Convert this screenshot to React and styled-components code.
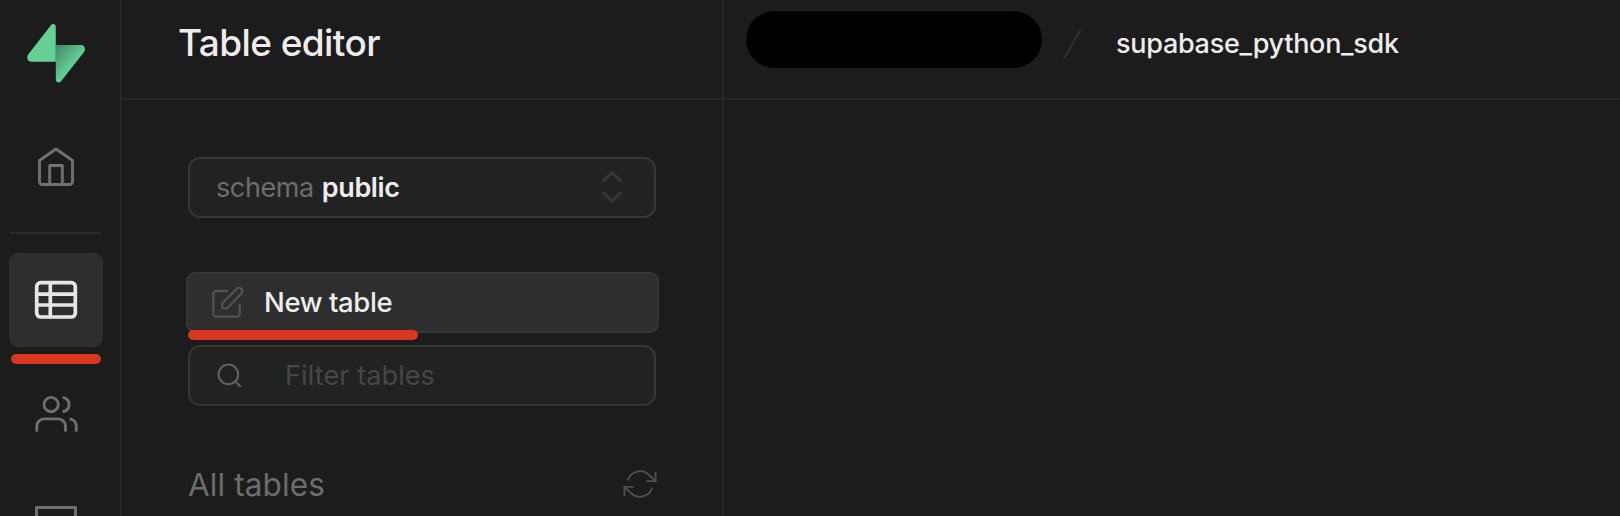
import React from "react";
import styled, { createGlobalStyle } from "styled-components";

const GlobalStyle = createGlobalStyle`
  *, *::before, *::after { box-sizing: border-box; }
  body { margin: 0; background: #1c1c1c; overflow: hidden; }
`;

const Shell = styled.div`
  display: flex;
  width: 1620px;
  height: 516px;
  overflow: hidden;
  background: #1c1c1c;
  color: #ededed;
  font-family: Inter, "Liberation Sans", sans-serif;
`;

const Rail = styled.nav`
  flex: none;
  width: 122px;
  height: 516px;
  padding-left: 9px;
  border-right: 2px solid #272727;
  overflow: hidden;
`;

const RailSlot = styled.div`
  display: flex;
  align-items: center;
  justify-content: center;
  width: 94px;
  height: ${(p) => p.$height}px;
  padding-bottom: ${(p) => p.$lift || 0}px;
  border-radius: 9px;
  background: ${(p) => (p.$active ? "#2e2e2e" : "transparent")};
  color: ${(p) => (p.$active ? "#e6e6e6" : "#707070")};
`;

const RailDivider = styled.div`
  width: 92px;
  height: 2px;
  margin-bottom: 19px;
  background: #2b2b2b;
`;

const RedMark = styled.div`
  width: ${(p) => p.$width}px;
  height: 10px;
  border-radius: 5px;
  background: #da3623;
`;

const RailMark = styled(RedMark)`
  margin: 7px 0 0 2px;
`;

const Glyph = styled.svg`
  display: block;
  flex: none;
  fill: none;
  stroke: currentColor;
  stroke-linecap: round;
  stroke-linejoin: round;
`;

const Panel = styled.aside`
  flex: none;
  display: flex;
  flex-direction: column;
  width: 602px;
  border-right: 2px solid #272727;
`;

const PanelHeader = styled.header`
  height: 100px;
  padding: 18px 0 0 56px;
  border-bottom: 2px solid #272727;
`;

const Title = styled.h1`
  margin: 0;
  font-size: 37px;
  line-height: 50px;
  font-weight: 500;
  letter-spacing: -0.6px;
  white-space: nowrap;
`;

const PanelBody = styled.div`
  display: flex;
  flex-direction: column;
  padding: 57px 66px 0;
`;

const Field = styled.div`
  display: flex;
  align-items: center;
  height: 61px;
  border: 2px solid #363636;
  border-radius: 12px;
  background: #222222;
  font-size: 27px;
  white-space: nowrap;
`;

const SchemaSelect = styled(Field)`
  padding: 0 32px 1px 26px;
`;

const SchemaKey = styled.span`
  color: #6c6c6c;
  letter-spacing: -0.4px;
`;

const SchemaValue = styled.span`
  flex: 1;
  margin-left: 8px;
  font-weight: 600;
  letter-spacing: -0.4px;
`;

const NewTableButton = styled.button`
  position: relative;
  display: flex;
  align-items: center;
  gap: 20px;
  height: 61px;
  margin: 54px -3px 0 -2px;
  padding: 0 22px 1px;
  border: 2px solid #363636;
  border-radius: 9px;
  background: #2e2e2e;
  color: #ededed;
  font: 550 27.5px Inter, "Liberation Sans", sans-serif;
  letter-spacing: -0.4px;
  white-space: nowrap;
`;

const ButtonIcon = styled.span`
  display: flex;
  color: #525252;
`;

const ButtonMark = styled(RedMark)`
  position: absolute;
  left: 0;
  bottom: -9px;
`;

const FilterField = styled(Field)`
  margin-top: 12px;
  padding: 0 26px 1px;
  gap: 42px;
  color: #606060;
`;

const Placeholder = styled.span`
  color: #474747;
  letter-spacing: 0.1px;
`;

const ListHeader = styled.div`
  display: flex;
  align-items: center;
  justify-content: space-between;
  margin: 57px -1px 0 0;
  height: 42px;
  color: #6c6c6c;
  font-size: 31.5px;
  white-space: nowrap;
`;

const ListTitle = styled.span`
  letter-spacing: 0.1px;
`;

const RefreshIcon = styled.span`
  display: flex;
  color: #505050;
`;

const Main = styled.main`
  flex: 1;
  min-width: 0;
`;

const Breadcrumbs = styled.header`
  display: flex;
  height: 100px;
  padding: 11px 0 0 22px;
  border-bottom: 2px solid #272727;
`;

const HiddenOrg = styled.div`
  width: 296px;
  height: 57px;
  border-radius: 29px;
  background: #000;
`;

const Slash = styled.div`
  display: flex;
  margin: 18px 34px 0 20px;
  color: #303030;
`;

const Project = styled.span`
  height: 34px;
  margin-top: 16px;
  font-size: 27px;
  line-height: 34px;
  font-weight: 500;
  letter-spacing: -0.28px;
  white-space: nowrap;
`;

function Logo() {
  return (
    <svg width="58" height="59" viewBox="0 0 109 113" preserveAspectRatio="none">
      <defs>
        <linearGradient id="bolt" x1="54" y1="43" x2="88" y2="72" gradientUnits="userSpaceOnUse">
          <stop offset="0" stopColor="#448763" />
          <stop offset="1" stopColor="#61cb92" />
        </linearGradient>
      </defs>
      <path
        d="M63.7 110.3C60.8 113.9 54.2 111.900 54.1 107.300V40.1H102.2C108.4 40.1 111 48 106.900 53.900L63.700 110.300Z"
        fill="url(#bolt)"
      />
      <path
        d="M45.3 2.1C48.2-1.5 54 .4 54 5V72.3H7.8C1 72.3-1.5 64.500 2.2 58.400L45.3 2.1Z"
        fill="#65cf96"
      />
    </svg>
  );
}

function HomeIcon() {
  return (
    <Glyph width="40" height="42" viewBox="0 0 40 42" strokeWidth="2.900">
      <path d="M20 3 3.500 14.500V35.500A3 3 0 0 0 6.500 38.500H33.500A3 3 0 0 0 36.500 35.500V14.500Z" />
      <path d="M13.700 38.500V19.500H26.300V38.500" />
    </Glyph>
  );
}

function TableIcon() {
  return (
    <Glyph width="44" height="40" viewBox="0 0 44 40" strokeWidth="3.700">
      <rect x="2.700" y="2.700" width="38.600" height="34.300" rx="4" />
      <path d="M16.300 3V37M3 14.200H41M3 25H41" />
    </Glyph>
  );
}

function UsersIcon() {
  return (
    <Glyph width="43" height="43" viewBox="0 0 24 24" strokeWidth="1.600">
      <path d="M17 21.500v-2.500a4 4 0 0 0-4-4H5a4 4 0 0 0-4 4v2.500" />
      <circle cx="9" cy="7" r="4" />
      <path d="M23 21.500v-2.500a4 4 0 0 0-3-3.870M16 3.130a4 4 0 0 1 0 7.750" />
    </Glyph>
  );
}

function BoxIcon() {
  return (
    <Glyph width="44" height="40" viewBox="0 0 44 40" strokeWidth="3">
      <path d="M2.500 38V2.500H41.500V38Z" />
    </Glyph>
  );
}

function EditIcon() {
  return (
    <Glyph width="34" height="34" viewBox="0 0 34 34" strokeWidth="2.300">
      <path d="M17 6H6.300a3 3 0 0 0-3 3V28.700a3 3 0 0 0 3 3H26.700a3 3 0 0 0 3-3V20" />
      <path d="M12.300 23.300V18.300L26.600 3.900a3.300 3.300 0 0 1 4.700 4.700L17.300 23.300Z" />
    </Glyph>
  );
}

function SearchIcon() {
  return (
    <Glyph width="27" height="27" viewBox="0 0 24 24" strokeWidth="1.800">
      <circle cx="11" cy="11" r="8.700" />
      <path d="M21.500 21.500L17.300 17.300" />
    </Glyph>
  );
}

export default function App() {
  return (
    <>
      <GlobalStyle />
      <Shell>
        <Rail>
          <RailSlot $height={106}>
            <Logo />
          </RailSlot>
          <RailSlot $height={126} $lift={4}>
            <HomeIcon />
          </RailSlot>
          <RailDivider />
          <RailSlot $height={94} $active>
            <TableIcon />
          </RailSlot>
          <RailMark $width={90} />
          <RailSlot $height={100} $lift={2}>
            <UsersIcon />
          </RailSlot>
          <RailSlot $height={122}>
            <BoxIcon />
          </RailSlot>
        </Rail>
        <Panel>
          <PanelHeader>
            <Title>Table editor</Title>
          </PanelHeader>
          <PanelBody>
            <SchemaSelect>
              <SchemaKey>schema</SchemaKey>
              <SchemaValue>public</SchemaValue>
              <Glyph width="20" height="34" viewBox="0 0 20 34" strokeWidth="3.600" color="#363636">
                <path d="M2 10.500 10 3l8 7.500M2 23.500 10 31l8-7.500" />
              </Glyph>
            </SchemaSelect>
            <NewTableButton>
              <ButtonIcon>
                <EditIcon />
              </ButtonIcon>
              New table
              <ButtonMark $width={230} />
            </NewTableButton>
            <FilterField>
              <SearchIcon />
              <Placeholder>Filter tables</Placeholder>
            </FilterField>
            <ListHeader>
              <ListTitle>All tables</ListTitle>
              <RefreshIcon>
                <Glyph width="34" height="34" viewBox="0 0 24 24" strokeWidth="1.300">
                  <path d="M23 4v6h-6M1 20v-6h6" />
                  <path d="M3.510 9a9 9 0 0 1 14.850-3.360L23 10M1 14l4.640 4.360A9 9 0 0 0 20.490 15" />
                </Glyph>
              </RefreshIcon>
            </ListHeader>
          </PanelBody>
        </Panel>
        <Main>
          <Breadcrumbs>
            <HiddenOrg />
            <Slash>
              <Glyph width="20" height="30" viewBox="0 0 20 30" strokeWidth="2">
                <path d="M2.500 28.500 18 2" />
              </Glyph>
            </Slash>
            <Project>supabase_python_sdk</Project>
          </Breadcrumbs>
        </Main>
      </Shell>
    </>
  );
}
